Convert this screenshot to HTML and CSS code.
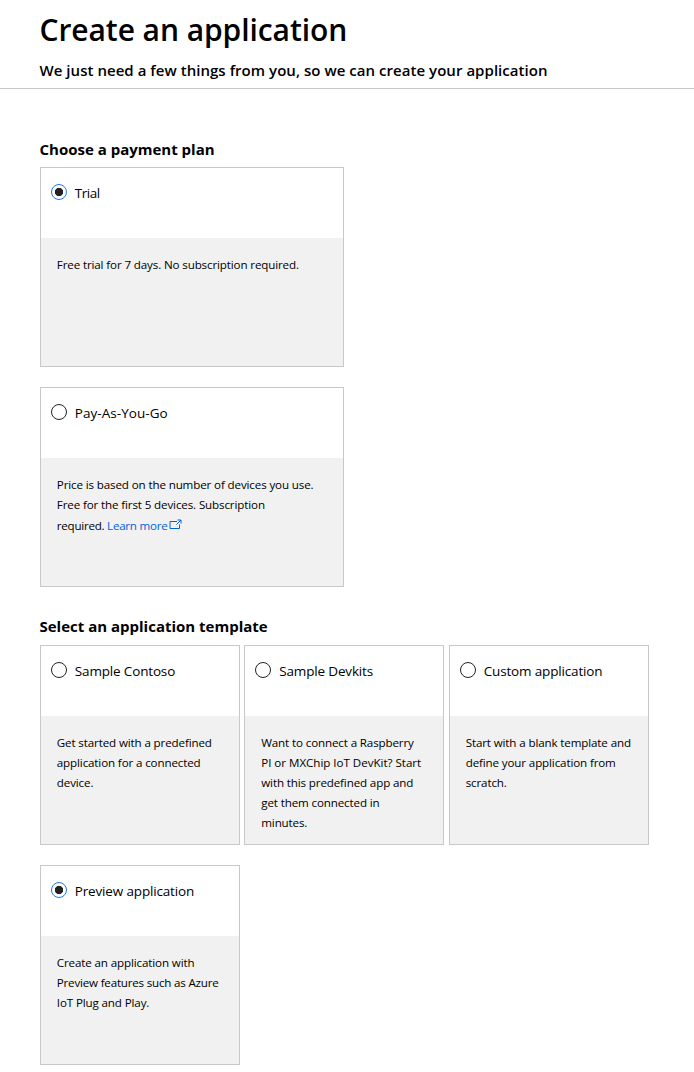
FILE: index.html
```html
<!DOCTYPE html>
<html lang="en"><head><meta charset="utf-8"><title>Create an application</title><link rel="stylesheet" href="styles.css"></head>
<body>
<header class="header">
<h1 class="title">Create an application</h1>
<p class="subtitle">We just need a few things from you, so we can create your application</p>
</header>
<main class="main">
<section class="section plans">
<h2 class="heading">Choose a payment plan</h2>
<div class="cards cards-stacked">
<label class="card card-wide"><span class="card-head"><span class="radio checked"></span><span class="name name-short">Trial</span></span><span class="card-body">Free trial for 7 days. No subscription required.</span></label>
<label class="card card-wide"><span class="card-head"><span class="radio"></span><span class="name name-loose">Pay-As-You-Go</span></span><span class="card-body">Price is based on the number of devices you use.<br>Free for the first 5 devices. Subscription<span class="link-line">required. <a class="link">Learn more<svg class="external" width="13" height="11" viewBox="0 0 13 11"><path d="M8 2.500H1v7h9.500V5.500M8.500 1H12v3.500M12 1L7.500 5.500" fill="none" stroke="currentColor"/></svg></a></span></span></label>
</div>
</section>
<section class="section templates">
<h2 class="heading">Select an application template</h2>
<div class="cards">
<label class="card"><span class="card-head"><span class="radio"></span><span class="name">Sample Contoso</span></span><span class="card-body">Get started with a predefined<br>application for a connected<br>device.</span></label>
<label class="card"><span class="card-head"><span class="radio"></span><span class="name">Sample Devkits</span></span><span class="card-body">Want to connect a Raspberry<br><span class="loose">PI or MXChip IoT DevKit? Start</span><br>with this predefined app and<br>get them connected in<br>minutes.</span></label>
<label class="card"><span class="card-head"><span class="radio"></span><span class="name">Custom application</span></span><span class="card-body">Start with a blank template and<br>define your application from<br>scratch.</span></label>
<label class="card"><span class="card-head"><span class="radio checked"></span><span class="name">Preview application</span></span><span class="card-body">Create an application with<br><span class="tight">Preview features such as Azure</span><br>IoT Plug and Play.</span></label>
</div>
</section>
</main>
</body></html>
```

FILE: styles.css
```css
*{box-sizing:border-box}
body{margin:0;background:#fff;color:#000;font-family:"Open Sans","Noto Sans",sans-serif}
.header{height:89px;padding:10px 39.500px 0;border-bottom:1px solid #c8c8c8;white-space:nowrap}
.title{margin:0;font-size:30px;line-height:40px;font-weight:600;letter-spacing:-.07px}
.subtitle{margin:10px 0 0;font-size:15px;line-height:20px;font-weight:600;letter-spacing:.04px}
.main{padding:50px 40px 0}
.heading{margin:0 0 7px;font-size:15px;line-height:21px;font-weight:700;white-space:nowrap;text-indent:-.5px}
.templates{margin-top:29px}
.templates .heading{margin-bottom:8px}
.cards{display:flex;flex-wrap:wrap;gap:20px 4.500px;width:624px}
.cards-stacked{flex-direction:column}
.card{display:block;width:199.950px;height:200px;border:1px solid #c8c8c8;background:#f1f1f1}
.card-wide{width:304px}
.card-head{display:flex;height:70px;padding:16px 10px 0;background:#fff;gap:7.800px}
.radio{width:16px;height:16px;border:1px solid #222;border-radius:50%;flex:none}
.radio.checked{border-color:#2375ee;background:radial-gradient(circle,#222 3.800px,#fff 4.500px)}
.name{margin-top:-1px;font-size:13.500px;line-height:20px;letter-spacing:-.16px;white-space:nowrap}
.name-short{letter-spacing:-.5px}
.name-loose{letter-spacing:.05px}
.card-body{display:block;padding:17px 15.800px 0;font-size:11.600px;line-height:20px;white-space:nowrap;letter-spacing:-.13px}
.loose{letter-spacing:-.03px}
.tight{letter-spacing:-.2px}
.link-line{display:block;padding-top:1px;letter-spacing:-.25px}
.link{color:#0064d8}
.external{margin-left:2px}
```
